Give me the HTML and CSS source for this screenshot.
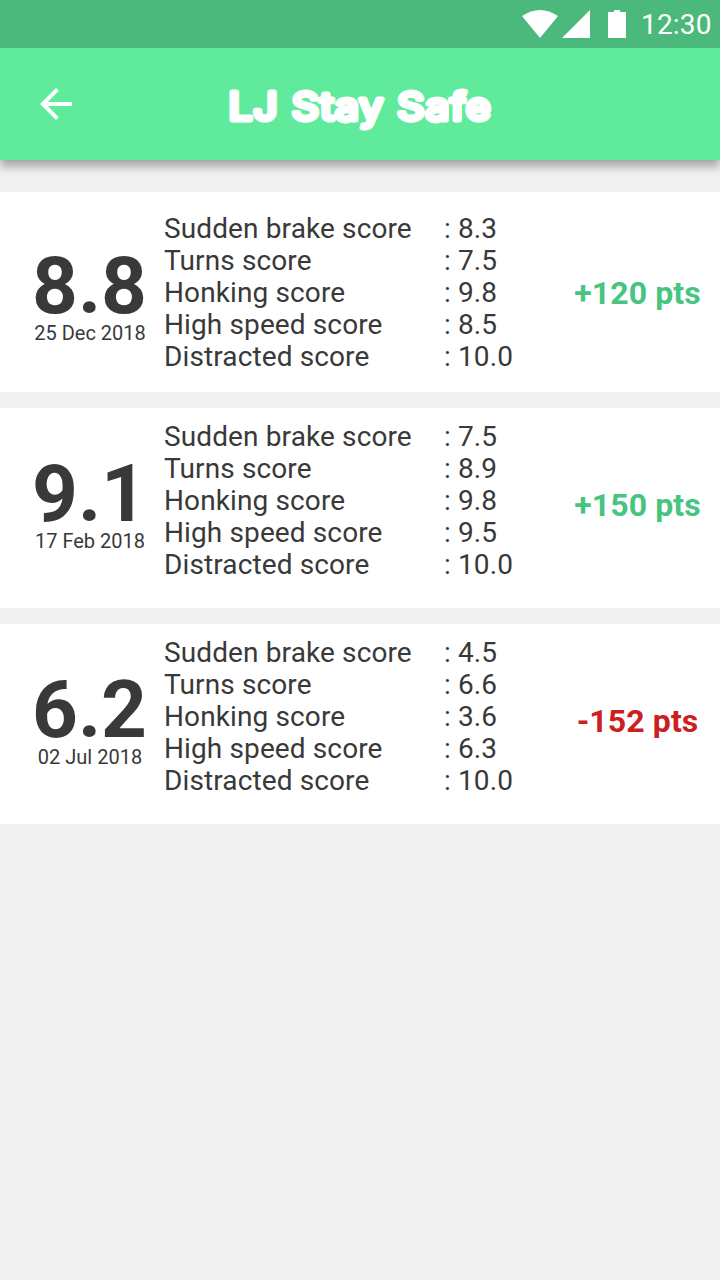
FILE: index.html
```html
<!DOCTYPE html>
<html lang="en">
<head>
<meta charset="utf-8">
<title>LJ Stay Safe</title>
<link rel="stylesheet" href="styles.css">
</head>
<body>
<div class="status">
  <svg class="wifi" viewBox="0 0 36 28" width="36" height="28"><path d="M0 6Q18-6 36 6L18 28Z" fill="#fff"/></svg>
  <svg class="signal" viewBox="0 0 28 28" width="28" height="28"><path d="M28 0V28H0Z" fill="#fff"/></svg>
  <svg class="battery" viewBox="0 0 18 28" width="18" height="28"><path d="M6 0h6v2h6v26H0V2h6z" fill="#fff"/></svg>
  <span class="clock">12:30</span>
</div>
<header class="bar">
  <svg class="back" viewBox="0 0 32 32" width="32" height="32"><path d="M32 14H7.7L18.8 2.8 16 0 0 16 16 32 18.8 29.2 7.7 18H32Z" fill="#fff"/></svg>
  <h1 class="heading"><svg width="300" height="64" viewBox="0 0 300 64"><text class="title" x="18.5" y="47.5" textLength="263" lengthAdjust="spacingAndGlyphs">LJ Stay Safe</text></svg></h1>
</header>
<main class="list">
  <section class="card first">
    <div class="total"><div class="score">8.8</div><div class="date">25 Dec 2018</div></div>
    <dl class="rows"><dt>Sudden brake score</dt><dd>: 8.3</dd><dt>Turns score</dt><dd>: 7.5</dd><dt>Honking score</dt><dd>: 9.8</dd><dt>High speed score</dt><dd>: 8.5</dd><dt>Distracted score</dt><dd>: 10.0</dd></dl>
    <div class="points gain">+120 pts</div>
  </section>
  <section class="card">
    <div class="total"><div class="score">9.1</div><div class="date">17 Feb 2018</div></div>
    <dl class="rows"><dt>Sudden brake score</dt><dd>: 7.5</dd><dt>Turns score</dt><dd>: 8.9</dd><dt>Honking score</dt><dd>: 9.8</dd><dt>High speed score</dt><dd>: 9.5</dd><dt>Distracted score</dt><dd>: 10.0</dd></dl>
    <div class="points gain">+150 pts</div>
  </section>
  <section class="card">
    <div class="total"><div class="score">6.2</div><div class="date">02 Jul 2018</div></div>
    <dl class="rows"><dt>Sudden brake score</dt><dd>: 4.5</dd><dt>Turns score</dt><dd>: 6.6</dd><dt>Honking score</dt><dd>: 3.6</dd><dt>High speed score</dt><dd>: 6.3</dd><dt>Distracted score</dt><dd>: 10.0</dd></dl>
    <div class="points loss">-152 pts</div>
  </section>
</main>
</body>
</html>
```
FILE: styles.css
```css
* { box-sizing: border-box; margin: 0; }
body { background: #f1f1f1; color: #393939; font-family: Roboto, sans-serif; min-height: 1280px; }
.status { position: relative; z-index: 1; height: 48px; background: #4bb97c; display: flex; align-items: center; padding-left: 522px; color: #fff; }
.signal { margin-left: 4px; }
.battery { margin-left: 18px; }
.clock { margin-left: 15px; padding-top: 1px; font-size: 28px; line-height: 48px; letter-spacing: .2px; }
.bar { height: 112px; background: #60eb9c; display: grid; grid-template-columns: 210px 300px 210px; align-items: center; box-shadow: 0 6px 10px rgba(0,0,0,.35); }
.back { margin-left: 39.5px; }
.heading { height: 64px; line-height: 0; }
.title { fill: #fff; stroke: #fff; stroke-width: 5px; stroke-linejoin: round; font: 400 38px Inter, sans-serif; letter-spacing: 1px; }
.list { display: grid; gap: 16px; padding-top: 32px; }
.card { height: 200px; background: #fff; display: grid; grid-template-columns: 164px 400px 156px; padding-top: 13px; }
.first { padding-top: 21px; }
.total { width: 112px; margin-left: 34px; padding-top: 33px; }
.score { font-size: 80px; font-weight: 700; line-height: 80px; height: 75px; margin-left: -2px; white-space: nowrap; }
.date { font-size: 20px; line-height: 24px; text-align: center; white-space: nowrap; }
.rows { display: grid; grid-template-columns: 280px 120px; grid-auto-rows: 32px; font-size: 28px; line-height: 32px; letter-spacing: .12px; }
.points { font-size: 32px; font-weight: 700; line-height: 40px; letter-spacing: .1px; text-align: center; padding: 64px 9px 0 0; white-space: nowrap; }
.first .points { padding-top: 60px; }
.gain { color: #47c480; }
.loss { color: #cc2020; }
```
